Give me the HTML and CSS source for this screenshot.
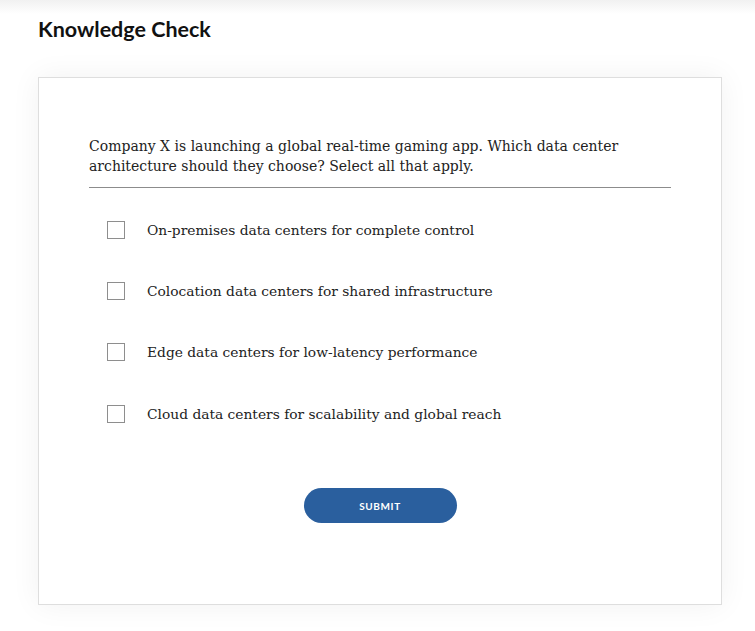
FILE: index.html
```html
<!DOCTYPE html>
<html>
<head>
	<meta charset="UTF-8">
	<title>Knowledge Check</title>
	<link rel="stylesheet" href="styles.css">
</head>
<body>
	<div class="page">
		<h1 class="title">Knowledge Check</h1>

		<div class="card">
			<p class="question">Company X is launching a global real-time gaming app. Which data center architecture should they choose? Select all that apply.</p>
			<div class="rule"></div>

			<ul class="options">
				<li class="option"><span class="box"></span><span class="label">On-premises data centers for complete control</span></li>
				<li class="option"><span class="box"></span><span class="label">Colocation data centers for shared infrastructure</span></li>
				<li class="option"><span class="box"></span><span class="label">Edge data centers for low-latency performance</span></li>
				<li class="option"><span class="box"></span><span class="label">Cloud data centers for scalability and global reach</span></li>
			</ul>

			<div class="actions">
				<button class="submit">SUBMIT</button>
			</div>
		</div>
	</div>
</body>
</html>
```

FILE: styles.css
```css
html {
	height: 100%;
	margin: 0;
}

body {
	margin: 0;
	height: 100%;
	background: #fff;
	background-image: linear-gradient(to bottom, #f1f1f1 0px, #fff 14px);
}

.page {
	padding: 16px 33px 0 38px;
}

.title {
	margin: 0;
	font-family: Lato, "Liberation Sans", sans-serif;
	font-weight: bold;
	font-size: 21.5px;
	line-height: 26px;
	color: #111;
}

.card {
	margin-top: 35px;
	border: 1px solid #dedede;
	background: #fff;
	box-shadow: 0 0 28px rgba(0, 0, 0, 0.06);
	padding: 58px 50px 81px 50px;
	font-family: "DejaVu Serif", "Liberation Serif", serif;
	color: #222;
}

.question {
	margin: 0;
	font-size: 14px;
	line-height: 20px;
}

.rule {
	height: 1px;
	background: #8c8c8c;
	margin-top: 11px;
}

.options {
	list-style: none;
	margin: 11px 0 0 0;
	padding: 0;
}

.option {
	display: flex;
	align-items: center;
	height: 61.33px;
	padding-left: 18px;
	font-size: 13.8px;
}

.box {
	width: 16px;
	height: 16px;
	border: 1px solid #8e8e8e;
	background: #fff;
	flex: none;
}

.label {
	margin-left: 22px;
}

.actions {
	display: flex;
	justify-content: center;
	margin-top: 44px;
}

.submit {
	width: 153px;
	height: 35px;
	border: none;
	border-radius: 18px;
	background: #2a5f9e;
	color: #fff;
	font-family: Lato, "Liberation Sans", sans-serif;
	font-weight: bold;
	font-size: 10px;
	letter-spacing: 0.6px;
}
```
